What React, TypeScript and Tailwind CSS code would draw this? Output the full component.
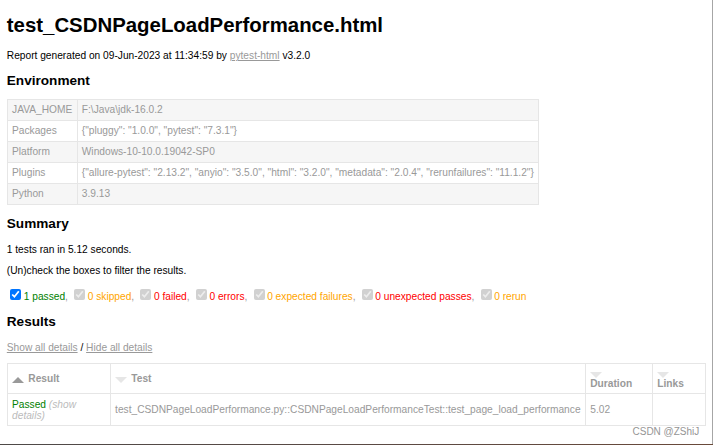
import React from "react";

const cell = "px-[4.25px] border border-[#e6e6e6] text-left";

function SortIcon({ active, block }: { active: boolean; block?: boolean }) {
  const pos = block ? "block mt-[4px]" : "float-left mt-[4.25px] mr-[4.25px]";
  return active ? (
    <div className={`${pos} w-0 h-0 border-x-[6.8px] border-x-transparent border-b-[6.8px] border-b-[#999]`} />
  ) : (
    <div className={`${pos} w-0 h-0 border-x-[6.8px] border-x-transparent border-t-[6.8px] border-t-[#e6e6e6]`} />
  );
}

function Filter({
  label,
  color,
  first,
  last,
}: {
  label: string;
  color: string;
  first?: boolean;
  last?: boolean;
}) {
  return (
    <>
      <input
        type="checkbox"
        defaultChecked
        disabled={!first}
        className="w-[11px] h-[11px] ml-[3.4px] mr-[2.55px] my-[2.55px] align-baseline"
      />
      <span className={color}>{label}</span>
      {!last && ", "}
    </>
  );
}

export default function App() {
  const env: [string, string][] = [
    ["JAVA_HOME", "F:\\Java\\jdk-16.0.2"],
    ["Packages", '{"pluggy": "1.0.0", "pytest": "7.3.1"}'],
    ["Platform", "Windows-10-10.0.19042-SP0"],
    [
      "Plugins",
      '{"allure-pytest": "2.13.2", "anyio": "3.5.0", "html": "3.2.0", "metadata": "2.0.4", "rerunfailures": "11.1.2"}',
    ],
    ["Python", "3.9.13"],
  ];

  return (
    <div className="w-[713px] h-[445px] overflow-hidden flex flex-col bg-white font-['Liberation_Sans',Arial,sans-serif] text-[10.2px] leading-[normal] text-[#999]">
      <div className="relative h-[444px] shrink-0 overflow-hidden border-r border-[#a6a6a6] pl-[6.8px] pr-[6px] pt-[13.67px]">
        <h1 className="text-[20.4px] font-bold text-black leading-[normal]">
          test_CSDNPageLoadPerformance.html
        </h1>
        <p className="text-black mt-[13.67px]">
          Report generated on 09-Jun-2023 at 11:34:59 by{" "}
          <a className="text-[#999] underline">pytest-html</a> v3.2.0
        </p>
        <h2 className="text-[13.6px] font-bold text-black leading-[normal] mt-[11.29px]">
          Environment
        </h2>
        <table className="mt-[11.29px] border-collapse">
          <tbody>
            {env.map(([k, v], i) => (
              <tr key={k} className={i % 2 === 0 ? "bg-[#f6f6f6]" : "bg-white"}>
                <td className="px-[4.25px] py-[4.5px] border border-[#e6e6e6]">{k}</td>
                <td className="px-[4.25px] py-[4.5px] border border-[#e6e6e6]">{v}</td>
              </tr>
            ))}
          </tbody>
        </table>
        <h2 className="text-[13.6px] font-bold text-black leading-[normal] mt-[11.29px]">
          Summary
        </h2>
        <p className="text-black mt-[12.8px]">1 tests ran in 5.12 seconds. </p>
        <p className="text-black mt-[10.2px]">
          (Un)check the boxes to filter the results.
        </p>
        <div className="mt-[10.2px]">
          <Filter first label="1 passed" color="text-[#008000]" />
          <Filter label="0 skipped" color="text-[#ffa500]" />
          <Filter label="0 failed" color="text-[#ff0000]" />
          <Filter label="0 errors" color="text-[#ff0000]" />
          <Filter label="0 expected failures" color="text-[#ffa500]" />
          <Filter label="0 unexpected passes" color="text-[#ff0000]" />
          <Filter last label="0 rerun" color="text-[#ffa500]" />
        </div>
        <h2 className="text-[13.6px] font-bold text-black leading-[normal] mt-[12px]">
          Results
        </h2>
        <p className="text-black mt-[12.2px]">
          <a className="text-[#999] underline">Show all details</a> /{" "}
          <a className="text-[#999] underline">Hide all details</a>
        </p>
        <table className="mt-[10.2px] w-full table-fixed border border-[#e6e6e6] text-[#999]">
          <colgroup>
            <col className="w-[103px]" />
            <col />
            <col className="w-[67px]" />
            <col className="w-[53px]" />
          </colgroup>
          <thead>
            <tr>
              <th className={`${cell} py-[4.25px] font-bold`}>
                <SortIcon active />
                Result
              </th>
              <th className={`${cell} py-[4.25px] font-bold`}>
                <SortIcon active={false} />
                Test
              </th>
              <th className={`${cell} py-[4.25px] font-bold`}>
                <SortIcon active={false} block />
                Duration
              </th>
              <th className={`${cell} py-[4.25px] font-bold`}>
                <SortIcon active={false} block />
                Links
              </th>
            </tr>
          </thead>
          <tbody>
            <tr>
              <td className={`${cell} py-[4.5px]`}>
                <span className="text-[#008000]">Passed</span>
                <span className="italic text-[#bbb]"> (show details)</span>
              </td>
              <td className={`${cell} py-[4.5px]`}>
                test_CSDNPageLoadPerformance.py::CSDNPageLoadPerformanceTest::test_page_load_performance
              </td>
              <td className={`${cell} py-[4.5px]`}>5.02</td>
              <td className={`${cell} py-[4.5px]`}></td>
            </tr>
          </tbody>
        </table>
        <div className="absolute left-[632.5px] top-[425.5px] text-[10px] text-[#959595] leading-[normal]">
          CSDN @ZShiJ
        </div>
      </div>
      <div className="h-[1px] shrink-0 bg-gradient-to-r from-[#4e4a48] via-[#5a4a44] to-[#6a4a3a]" />
    </div>
  );
}
